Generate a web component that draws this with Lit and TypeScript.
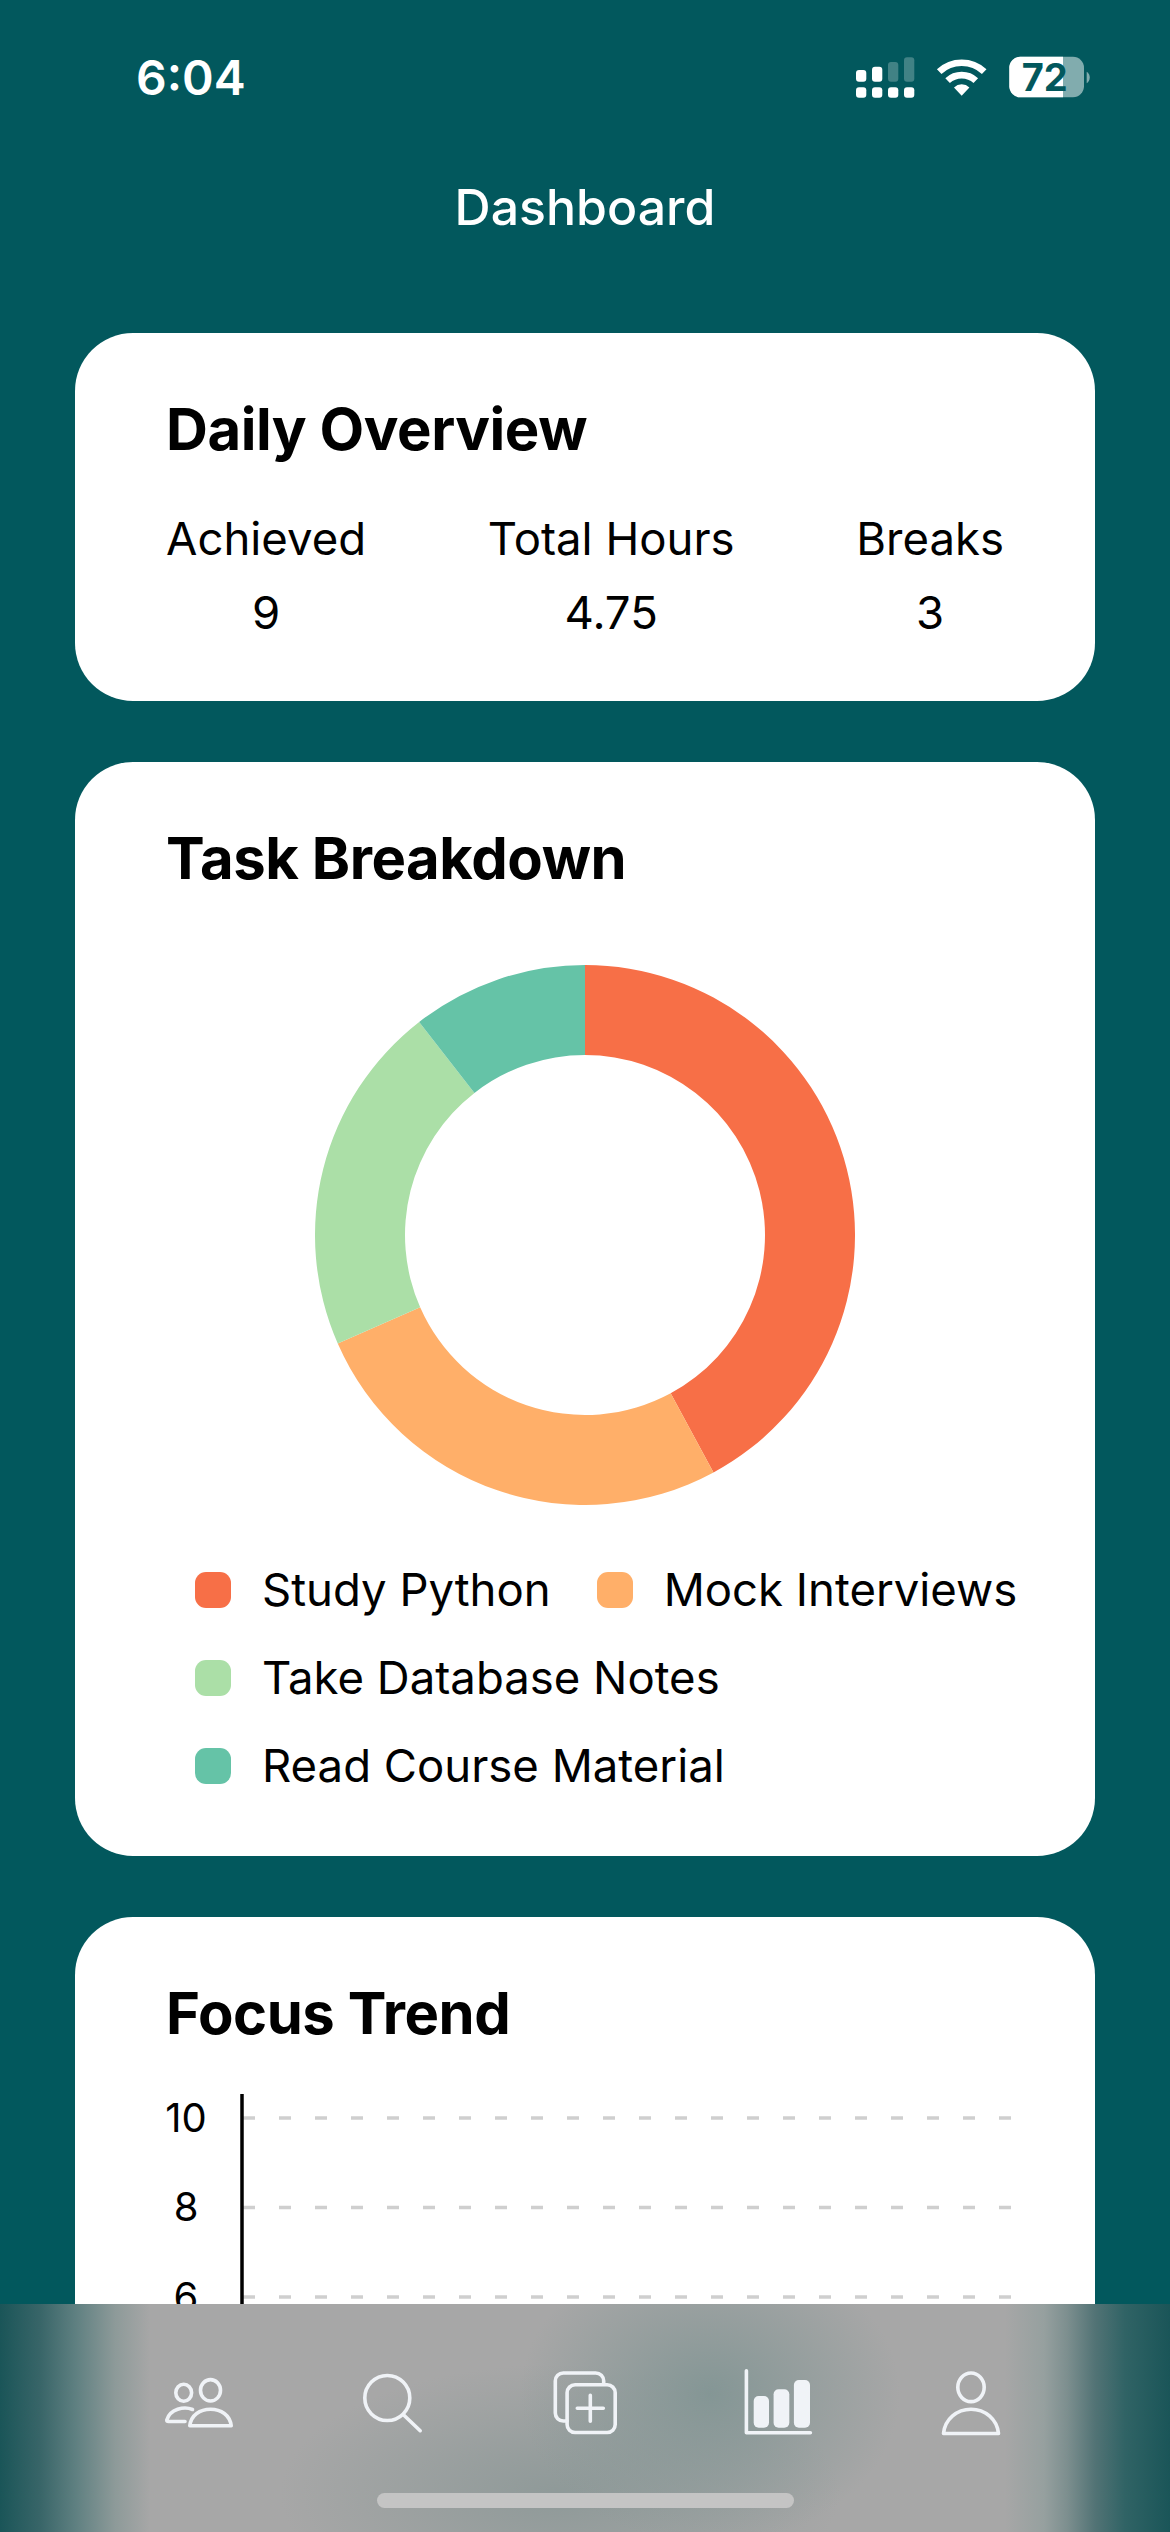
import { LitElement, html, css, svg } from "lit";
import { customElement } from "lit/decorators.js";

const slices = [
  { label: "Study Python", value: 4, color: "#f76f47" },
  { label: "Mock Interviews", value: 2.5, color: "#ffaf69" },
  { label: "Take Database Notes", value: 2, color: "#abdfa7" },
  { label: "Read Course Material", value: 1, color: "#65c3a7" },
];

function donutPaths() {
  const total = slices.reduce((s, d) => s + d.value, 0);
  let acc = 0;
  const R = 270, r = 180, c = 270;
  const pt = (rad: number, a: number) => `${c + rad * Math.sin(a)} ${c - rad * Math.cos(a)}`;
  return slices.map((d) => {
    const a0 = (acc / total) * Math.PI * 2;
    acc += d.value;
    const a1 = (acc / total) * Math.PI * 2;
    const large = a1 - a0 > Math.PI ? 1 : 0;
    return svg`<path fill=${d.color} d="M${pt(R, a0)} A${R} ${R} 0 ${large} 1 ${pt(R, a1)} L${pt(r, a1)} A${r} ${r} 0 ${large} 0 ${pt(r, a0)} Z"></path>`;
  });
}

const ticks = [10, 8, 6, 4];

@customElement("app-root")
export class AppRoot extends LitElement {
  static styles = css`
    :host {
      display: block;
      position: relative;
      width: 1170px;
      height: 2532px;
      overflow: hidden;
      background: #02585d;
      font-family: Inter, "Liberation Sans", sans-serif;
      color: #000;
    }
    .status {
      display: flex;
      justify-content: space-between;
      align-items: center;
      height: 154px;
      padding: 0 79px 0 136px;
      color: #fff;
    }
    .time { font-size: 48px; font-weight: 600; }
    .status svg { display: block; }
    .batt-text { font: 700 38px Inter, sans-serif; }
    .title {
      text-align: center;
      color: #fff;
      font-size: 50px;
      font-weight: 500;
      line-height: 60px;
      margin-top: 23px;
    }
    main {
      display: flex;
      flex-direction: column;
      gap: 61px;
      margin: 96px 75px 0;
    }
    .card {
      background: #fff;
      border-radius: 58px;
      padding: 62px 91px 46px;
    }
    h2 {
      margin: 0 0 0;
      font-size: 58px;
      line-height: 68px;
      font-weight: 700;
      letter-spacing: -0.45px;
    }
    .stats {
      display: flex;
      justify-content: space-between;
      margin: 39px 0 5px;
    }
    .stat {
      text-align: center;
      font-size: 45.5px;
      line-height: 74px;
    }
    .donut { display: block; margin: 73px auto 0; }
    .legend {
      display: flex;
      flex-wrap: wrap;
      gap: 0 46px;
      margin: 41px -40px 0 29px;
    }
    .item {
      display: flex;
      align-items: center;
      gap: 31px;
      font-size: 45.5px;
      line-height: 88px;
      white-space: nowrap;
    }
    .dot { width: 36px; height: 36px; border-radius: 11px; }
    .chart { display: block; margin-top: 47px; overflow: visible; }
    .chart text { font: 400 40px Inter, sans-serif; fill: #000; }
    .tabbar {
      position: absolute;
      left: 0;
      right: 0;
      bottom: 0;
      height: 228px;
      background:
        linear-gradient(90deg, #1a5558 0, #386568 40px, #5f8081 76px, #8d9a99 115px, rgba(161,163,162,0) 150px),
        linear-gradient(270deg, #1a5558 0, #306365 45px, #527375 75px, #7d8f8f 103px, #96a09f 126px, rgba(161,163,162,0) 165px),
        radial-gradient(ellipse 190px 150px at 710px 90px, rgba(132,150,149,1), rgba(132,150,149,0)),
        radial-gradient(ellipse 280px 130px at 560px 190px, rgba(140,152,151,.9), rgba(140,152,151,0)),
        #a7a7a7;
    }
    .tabs {
      display: flex;
      justify-content: center;
      padding-top: 58px;
    }
    .tab { width: 193px; display: flex; justify-content: center; }
    .tab svg {
      display: block;
      fill: none;
      stroke: #f0f3f7;
      stroke-width: 3.6;
      stroke-linecap: round;
      stroke-linejoin: round;
    }
    .tab .solid { fill: #f0f3f7; stroke: none; }
    .home {
      position: absolute;
      left: 377px;
      top: 189px;
      width: 417px;
      height: 15px;
      border-radius: 8px;
      background: #c4c4c4;
    }
  `;

  private statusIcons() {
    const dots = [0, 16, 32, 48];
    const tops = [13, 9.7, 5, 0.3];
    return html`<svg width="235" height="52" viewBox="0 -6 235 52">
      ${dots.map((x) => svg`<rect x=${x} y="30.3" width="10.3" height="10.4" rx="3" fill="#fff"></rect>`)}
      ${dots.map((x, i) => svg`<rect x=${x} y=${tops[i]} width="10.3" height=${24.7 - tops[i]} rx="3" fill="#fff" opacity=${i < 2 ? 1 : 0.25}></rect>`)}
      <g transform="translate(105.7 38.7)" fill="none" stroke="#fff" stroke-width="6.7">
        <path d="M-22.5 -24.1 A33 33 0 0 1 22.5 -24.1"></path>
        <path d="M-14.1 -15.1 A20.7 20.7 0 0 1 14.1 -15.1"></path>
        <path d="M0 0 L-7.7 -8.3 A11.3 11.3 0 0 1 7.7 -8.3 Z" fill="#fff" stroke="none"></path>
      </g>
      <rect x="153.3" y="-0.3" width="74.7" height="40.6" rx="11" fill="#fff" opacity="0.5"></rect>
      <path d="M164.3 -0.3 H207 V40.3 H164.3 A11 11 0 0 1 153.3 29.3 V10.7 A11 11 0 0 1 164.3 -0.3 Z" fill="#fff"></path>
      <path d="M230.7 14.7 A7 7 0 0 1 230.7 26.3 Z" fill="#fff" opacity="0.5"></path>
      <text class="batt-text" x="188.7" y="34" text-anchor="middle" fill="#02585d">72</text>
    </svg>`;
  }

  private icon(body: unknown) {
    return html`<div class="tab"><svg width="80" height="80" viewBox="0 0 80 80">${body}</svg></div>`;
  }

  render() {
    return html`
      <div class="status">
        <span class="time">6:04</span>
        ${this.statusIcons()}
      </div>
      <div class="title">Dashboard</div>
      <main>
        <section class="card">
          <h2>Daily Overview</h2>
          <div class="stats">
            <div class="stat"><div>Achieved</div><div>9</div></div>
            <div class="stat"><div>Total Hours</div><div>4.75</div></div>
            <div class="stat"><div>Breaks</div><div>3</div></div>
          </div>
        </section>
        <section class="card">
          <h2>Task Breakdown</h2>
          <svg class="donut" width="540" height="540" viewBox="0 0 540 540">${donutPaths()}</svg>
          <div class="legend">
            ${slices.map(
              (s) => html`<div class="item"><span class="dot" style="background:${s.color}"></span>${s.label}</div>`
            )}
          </div>
        </section>
        <section class="card">
          <h2>Focus Trend</h2>
          <svg class="chart" width="850" height="340" viewBox="0 0 850 340">
            ${ticks.map((t, i) => {
              const y = 24 + i * 89.5;
              return svg`<text x="20" y=${y + 13.5} text-anchor="middle">${t}</text>
                <line x1="77" x2="845" y1=${y} y2=${y} stroke="#cfcfcf" stroke-width="3.5" stroke-dasharray="12 24"></line>`;
            })}
            <line x1="76" x2="76" y1="0" y2="340" stroke="#000" stroke-width="3.5"></line>
          </svg>
        </section>
      </main>
      <nav class="tabbar">
        <div class="tabs">
          ${this.icon(svg`
            <ellipse cx="24.7" cy="30.7" rx="7.9" ry="8.5"></ellipse>
            <ellipse cx="51.5" cy="28.3" rx="10" ry="10.7"></ellipse>
            <path d="M30.8 63.8 C32 53 41 47.2 51.5 47.2 C62 47.2 71 53 72.2 63.8 Z"></path>
            <path d="M33.5 47.5 C25 44 11 47 7.8 58 Q7.5 59.5 9.5 59.5 L26 59.5"></path>
          `)}
          ${this.icon(svg`
            <circle cx="35.3" cy="36" r="22.5"></circle>
            <path d="M51.7 53 L68.2 68.7"></path>
          `)}
          ${this.icon(svg`
            <path d="M58.7 22 V19 a8 8 0 0 0 -8 -8 H18.3 a8 8 0 0 0 -8 8 V51 a8 8 0 0 0 8 8 H22"></path>
            <rect x="22.1" y="22.8" width="48.1" height="47.7" rx="8"></rect>
            <path d="M45.3 33.3 V59.3 M32.3 46.3 H58.3"></path>
          `)}
          ${this.icon(svg`
            <path d="M8.4 8.8 V70.8 H72.4"></path>
            <rect class="solid" x="15.7" y="34" width="15.3" height="31.7" rx="5"></rect>
            <rect class="solid" x="35.6" y="27.3" width="15.7" height="38.4" rx="5"></rect>
            <rect class="solid" x="55.9" y="18" width="16.1" height="47.7" rx="5"></rect>
          `)}
          ${this.icon(svg`
            <ellipse cx="40" cy="25.3" rx="13.2" ry="14.3"></ellipse>
            <path d="M12.5 71.5 C14 57 26 47.2 40 47.2 C54 47.2 66 57 67.5 71.5 Z"></path>
          `)}
        </div>
        <div class="home"></div>
      </nav>
    `;
  }
}
